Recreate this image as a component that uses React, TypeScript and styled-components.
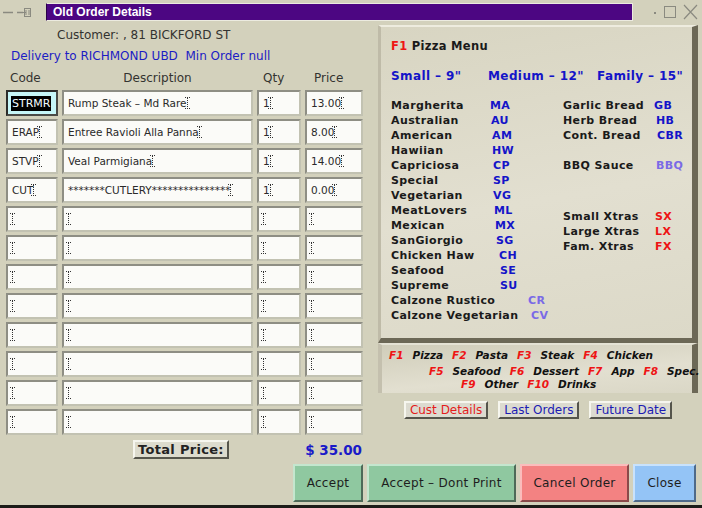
import styled, { createGlobalStyle } from "styled-components";

const GlobalStyle = createGlobalStyle`
  html, body {
    margin: 0;
    padding: 0;
    background: #d3d1bc;
    overflow: hidden;
  }
  #root {
    width: 702px;
    height: 508px;
  }
`;

type OrderLine = {
  code: string;
  desc: string;
  qty: string;
  price: string;
};

const orders: OrderLine[] = [
  { code: "STRMR", desc: "Rump Steak – Md Rare", qty: "1", price: "13.00" },
  { code: "ERAP", desc: "Entree Ravioli Alla Panna", qty: "1", price: "8.00" },
  { code: "STVP", desc: "Veal Parmigiana", qty: "1", price: "14.00" },
  { code: "CUT", desc: "*******CUTLERY***************", qty: "1", price: "0.00" },
  ...Array.from({ length: 8 }, () => ({ code: "", desc: "", qty: "", price: "" })),
];

type MenuItem = { name: string; code: string; at: number; tone?: "blue" | "lilac" | "red"; gap?: number };

const pizzas: MenuItem[] = [
  { name: "Margherita", code: "MA", at: 99 },
  { name: "Australian", code: "AU", at: 100 },
  { name: "American", code: "AM", at: 101 },
  { name: "Hawiian", code: "HW", at: 101 },
  { name: "Capriciosa", code: "CP", at: 102 },
  { name: "Special", code: "SP", at: 102 },
  { name: "Vegetarian", code: "VG", at: 102 },
  { name: "MeatLovers", code: "ML", at: 103 },
  { name: "Mexican", code: "MX", at: 104 },
  { name: "SanGiorgio", code: "SG", at: 105 },
  { name: "Chicken Haw", code: "CH", at: 108 },
  { name: "Seafood", code: "SE", at: 109 },
  { name: "Supreme", code: "SU", at: 109 },
  { name: "Calzone Rustico", code: "CR", at: 137, tone: "lilac" },
  { name: "Calzone Vegetarian", code: "CV", at: 140, tone: "lilac" },
];

const extras: MenuItem[] = [
  { name: "Garlic Bread", code: "GB", at: 91 },
  { name: "Herb Bread", code: "HB", at: 93 },
  { name: "Cont. Bread", code: "CBR", at: 94 },
  { name: "BBQ Sauce", code: "BBQ", at: 93, tone: "lilac", gap: 15 },
  { name: "Small Xtras", code: "SX", at: 92, tone: "red", gap: 36 },
  { name: "Large Xtras", code: "LX", at: 92, tone: "red" },
  { name: "Fam. Xtras", code: "FX", at: 92, tone: "red" },
];

const keyLines = [
  { indent: 7, top: 3, keys: [["F1", "Pizza"], ["F2", "Pasta"], ["F3", "Steak"], ["F4", "Chicken"]] },
  { indent: 47, top: 2, keys: [["F5", "Seafood"], ["F6", "Dessert"], ["F7", "App"], ["F8", "Spec."]] },
  { indent: 79, top: -1, keys: [["F9", "Other"], ["F10", "Drinks"]] },
];

const toneColor = { blue: "#1414c8", lilac: "#7a6ae6", red: "#ee1414" };

function Caret() {
  return (
    <CaretMark width="5" height="12" viewBox="0 0 5 12">
      <path d="M0 0.5h5M0 11.5h5" stroke="#333" strokeWidth="1" strokeDasharray="1 1" />
      <path d="M2.5 1v10" stroke="#333" strokeWidth="1" strokeDasharray="1 1" />
    </CaretMark>
  );
}

function Field({ value, focus }: { value: string; focus?: boolean }) {
  if (focus) {
    return (
      <Cell $focus>
        <Selected>{value}</Selected>
      </Cell>
    );
  }
  return (
    <Cell>
      {value}
      <Caret />
    </Cell>
  );
}

export default function App() {
  return (
    <>
      <GlobalStyle />
      <Window>
        <TitleBar>
          <svg width="46" height="22" viewBox="0 0 46 22">
            <path d="M3 12.5h10" stroke="#8a8a80" strokeWidth="1.5" />
            <path d="M17 12.5h6" stroke="#8a8a80" strokeWidth="1.5" />
            <rect x="24.5" y="8.5" width="6" height="8" fill="none" stroke="#8a8a80" />
            <path d="M23 12.5h3M26 10v5M29 10v5" stroke="#8a8a80" />
          </svg>
          <TitleStrip>Old Order Details</TitleStrip>
          <svg width="69" height="22" viewBox="0 0 69 22">
            <rect x="21" y="12" width="2" height="2" fill="#8a8a80" />
            <rect x="31.5" y="6.5" width="11" height="11" fill="none" stroke="#8a8a80" />
            <path d="M51 5l13 14M64 5l-13 14" stroke="#8a8a80" strokeWidth="1.2" />
          </svg>
        </TitleBar>

        <Main>
          <LeftPane>
            <CustomerLine>Customer: , 81 BICKFORD ST</CustomerLine>
            <DeliveryLine>{"Delivery to RICHMOND UBD  Min Order null"}</DeliveryLine>
            <OrderGrid>
              <HeadCell $pad={4}>Code</HeadCell>
              <HeadCell $center>Description</HeadCell>
              <HeadCell $pad={6}>Qty</HeadCell>
              <HeadCell $pad={9}>Price</HeadCell>
              {orders.map((o, i) => (
                <Row key={i}>
                  <Field value={o.code} focus={i === 0} />
                  <Field value={o.desc} />
                  <Field value={o.qty} />
                  <Field value={o.price} />
                </Row>
              ))}
            </OrderGrid>
            <TotalRow>
              <TotalButton>Total Price:</TotalButton>
              <TotalValue>$ 35.00</TotalValue>
            </TotalRow>
          </LeftPane>

          <RightPane>
            <MenuPanel>
              <MenuTitle>
                <FKey>F1</FKey> Pizza Menu
              </MenuTitle>
              <SizeRow>
                <span>Small – 9"</span>
                <span>Medium – 12"</span>
                <span>Family – 15"</span>
              </SizeRow>
              <MenuColumns>
                <MenuList>
                  {pizzas.map((p) => (
                    <MenuRow key={p.code} $at={p.at}>
                      <span>{p.name}</span>
                      <Code $tone={p.tone ?? "blue"}>{p.code}</Code>
                    </MenuRow>
                  ))}
                </MenuList>
                <MenuList>
                  {extras.map((p) => (
                    <MenuRow key={p.code} $at={p.at} $gap={p.gap}>
                      <span>{p.name}</span>
                      <Code $tone={p.tone ?? "blue"}>{p.code}</Code>
                    </MenuRow>
                  ))}
                </MenuList>
              </MenuColumns>
            </MenuPanel>

            <KeysPanel>
              {keyLines.map((line, i) => (
                <KeyLine key={i} $indent={line.indent} $top={line.top}>
                  {line.keys.map(([k, label]) => (
                    <KeyItem key={k}>
                      <FKey>{k}</FKey>
                      <KeyLabel>{label}</KeyLabel>
                    </KeyItem>
                  ))}
                </KeyLine>
              ))}
            </KeysPanel>

            <LinkRow>
              <LinkButton $red>Cust Details</LinkButton>
              <LinkButton>Last Orders</LinkButton>
              <LinkButton>Future Date</LinkButton>
            </LinkRow>
          </RightPane>
        </Main>

        <Footer>
          <ActionButton $kind="green" $width={70}>Accept</ActionButton>
          <ActionButton $kind="green" $width={149}>Accept – Dont Print</ActionButton>
          <ActionButton $kind="red" $width={109}>Cancel Order</ActionButton>
          <ActionButton $kind="blue" $width={63}>Close</ActionButton>
        </Footer>
      </Window>
    </>
  );
}

const Window = styled.div`
  width: 702px;
  height: 508px;
  box-sizing: border-box;
  background: #d3d1bc;
  border-bottom: 3px solid #1c1c18;
  display: flex;
  flex-direction: column;
  font-family: "DejaVu Sans", sans-serif;
  color: #2a2a2a;
`;

const TitleBar = styled.div`
  height: 22px;
  display: flex;
  align-items: center;
  flex-shrink: 0;
`;

const TitleStrip = styled.div`
  flex: 1;
  height: 18px;
  margin-top: 1px;
  box-sizing: border-box;
  background: #4c0682;
  border: 1px solid #ecebe0;
  border-left-color: #2a0048;
  color: #ffffff;
  font-family: "Liberation Sans", Arial, sans-serif;
  font-weight: bold;
  font-size: 12px;
  line-height: 16px;
  padding-left: 6px;
`;

const Main = styled.div`
  height: 438px;
  display: flex;
  gap: 8px;
`;

const LeftPane = styled.div`
  width: 364px;
  padding-left: 6px;
  display: flex;
  flex-direction: column;
`;

const CustomerLine = styled.div`
  margin-top: 4px;
  padding-left: 51px;
  font-size: 12px;
  line-height: 18px;
  color: #333330;
`;

const DeliveryLine = styled.div`
  margin-top: 3px;
  padding-left: 5px;
  font-size: 12px;
  line-height: 18px;
  color: #1c1cc4;
  white-space: pre;
`;

const OrderGrid = styled.div`
  margin-top: 4px;
  display: grid;
  grid-template-columns: 52px 191px 44px 58px;
  column-gap: 4px;
  row-gap: 3px;
  width: 356px;
  grid-template-rows: 18px;
`;

const Row = styled.div`
  display: contents;
`;

const HeadCell = styled.div<{ $pad?: number; $center?: boolean }>`
  font-size: 12px;
  line-height: 18px;
  color: #333330;
  padding-left: ${(p) => p.$pad ?? 0}px;
  text-align: ${(p) => (p.$center ? "center" : "left")};
  margin-bottom: 1px;
`;

const Cell = styled.div<{ $focus?: boolean }>`
  height: 26px;
  box-sizing: border-box;
  display: flex;
  align-items: center;
  padding-left: ${(p) => (p.$focus ? 3 : 4)}px;
  background: ${(p) => (p.$focus ? "#c6f6f8" : "#fbfbf8")};
  border: 2px solid;
  border-color: ${(p) =>
    p.$focus ? "#2c2c2a #4a4a46 #4a4a46 #2c2c2a" : "#8e8e84 #c2c2b2 #c2c2b2 #8e8e84"};
  font-size: 10.5px;
  color: #2a2a2a;
  white-space: pre;
  overflow: hidden;
`;

const Selected = styled.span`
  background: #000;
  color: #f4fcff;
  padding: 1px 1px;
  font-size: 11px;
`;

const CaretMark = styled.svg`
  margin-left: -2px;
  flex-shrink: 0;
`;

const TotalRow = styled.div`
  margin-top: 5px;
  width: 356px;
  display: flex;
  align-items: center;
  padding-left: 127px;
  box-sizing: border-box;
`;

const TotalButton = styled.div`
  width: 96px;
  height: 19px;
  box-sizing: border-box;
  background: #dcdbcd;
  border: 2px solid;
  border-color: #f6f6ee #56564c #56564c #f6f6ee;
  font-weight: bold;
  font-size: 13px;
  letter-spacing: 0.3px;
  line-height: 15px;
  text-align: center;
  color: #222;
`;

const TotalValue = styled.div`
  margin-left: auto;
  font-weight: bold;
  font-size: 13.5px;
  color: #1a1ac8;
`;

const RightPane = styled.div`
  width: 320px;
  margin-top: 3px;
  display: flex;
  flex-direction: column;
`;

const MenuPanel = styled.div`
  height: 318px;
  box-sizing: border-box;
  border-style: solid;
  border-width: 2px 6px 5px 3px;
  border-color: #eeecdf #6c6856 #6c6856 #bfbba8;
  background: linear-gradient(170deg, #d8d5c2 0%, #e2dfd0 55%, #dcd9c8 100%);
  padding: 11px 0 0 10px;
  font-weight: bold;
  font-size: 11px;
  color: #1a1a1a;
`;

const MenuTitle = styled.div`
  font-size: 11.5px;
  line-height: 16px;
  letter-spacing: 0.3px;
`;

const FKey = styled.span`
  color: #ee1414;
`;

const SizeRow = styled.div`
  margin-top: 14px;
  display: grid;
  grid-template-columns: 97px 109px auto;
  font-size: 12px;
  letter-spacing: 0.4px;
  line-height: 16px;
  color: #1414c8;
`;

const MenuColumns = styled.div`
  margin-top: 14px;
  display: grid;
  grid-template-columns: 172px auto;
`;

const MenuList = styled.div`
  display: flex;
  flex-direction: column;
`;

const MenuRow = styled.div<{ $at: number; $gap?: number }>`
  display: grid;
  grid-template-columns: ${(p) => p.$at}px auto;
  line-height: 15px;
  letter-spacing: 0.4px;
  white-space: nowrap;
  margin-top: ${(p) => p.$gap ?? 0}px;
`;

const Code = styled.span<{ $tone: "blue" | "lilac" | "red" }>`
  color: ${(p) => toneColor[p.$tone]};
`;

const KeysPanel = styled.div`
  height: 50px;
  box-sizing: border-box;
  border-style: solid;
  border-width: 2px 6px 0 4px;
  border-color: #e4e2d4 #6c6856 transparent #c4c0ae;
  background: linear-gradient(175deg, #d0cdba 0%, #e2dfd0 60%, #dad7c6 100%);
  font-weight: bold;
  font-style: italic;
  font-size: 10.5px;
  line-height: 14px;
  color: #111;
`;

const KeyLine = styled.div<{ $indent: number; $top: number }>`
  display: flex;
  padding-left: ${(p) => p.$indent}px;
  margin-top: ${(p) => p.$top}px;
  white-space: nowrap;
`;

const KeyItem = styled.span`
  margin-right: 9px;
`;

const KeyLabel = styled.span`
  margin-left: 9px;
`;

const LinkRow = styled.div`
  margin-top: 8px;
  display: flex;
  justify-content: center;
  gap: 10px;
`;

const LinkButton = styled.div<{ $red?: boolean }>`
  height: 18px;
  box-sizing: border-box;
  padding: 0 4px;
  background: #dcdbd0;
  border: 2px solid;
  border-color: #f6f6ee #55554c #55554c #f6f6ee;
  font-size: 12px;
  line-height: 14px;
  color: ${(p) => (p.$red ? "#e41c1c" : "#1c1cb4")};
`;

const buttonColors = {
  green: { bg: "#8fc8a0", light: "#c4e6ce", dark: "#4e6a58" },
  red: { bg: "#f38282", light: "#fbbcbc", dark: "#8a4a4a" },
  blue: { bg: "#94c4f6", light: "#c8e2fc", dark: "#4e6a8a" },
};

const Footer = styled.div`
  margin-top: 4px;
  height: 38px;
  display: flex;
  justify-content: flex-end;
  gap: 4px;
  padding-right: 6px;
`;

const ActionButton = styled.div<{ $kind: "green" | "red" | "blue"; $width: number }>`
  width: ${(p) => p.$width}px;
  height: 38px;
  box-sizing: border-box;
  display: flex;
  align-items: center;
  justify-content: center;
  background: ${(p) => buttonColors[p.$kind].bg};
  border: 2px solid;
  border-color: ${(p) => {
    const c = buttonColors[p.$kind];
    return `${c.light} ${c.dark} ${c.dark} ${c.light}`;
  }};
  font-size: 12px;
  letter-spacing: 0.3px;
  color: #1e1e1e;
`;
